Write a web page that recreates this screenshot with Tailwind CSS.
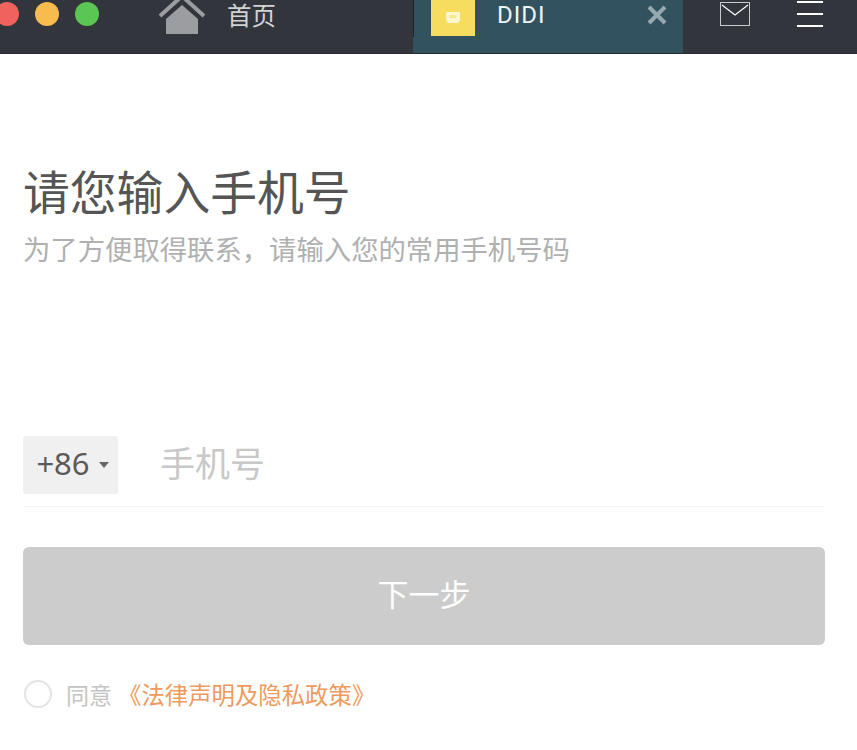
<!DOCTYPE html>
<html lang="zh-CN">
<head>
<meta charset="utf-8">
<script src="https://cdn.jsdelivr.net/npm/@tailwindcss/browser@4"></script>
</head>
<body class="w-[857px] h-[750px] overflow-hidden bg-white font-['Noto_Sans_CJK_SC','Noto_Sans',sans-serif]">
<header class="relative flex h-[54px] bg-[#32353c] border-b border-[#26292e] overflow-hidden">
  <div class="flex items-center gap-[16px] h-[28px] ml-[-5px]">
    <span class="w-[24px] h-[24px] rounded-full bg-[#f0625e]"></span>
    <span class="w-[24px] h-[24px] rounded-full bg-[#f8bb4d]"></span>
    <span class="w-[24px] h-[24px] rounded-full bg-[#5cc654]"></span>
  </div>
  <svg class="ml-[59px] mt-[-6px] shrink-0" width="48" height="42" viewBox="0 0 48 42"><path d="M2 22 L24 2 L46 22" fill="none" stroke="#9b9da1" stroke-width="4"/><path d="M8 25 L24 11 L40 25 V40 H8 Z" fill="#9b9da1"/></svg>
  <span class="ml-[21px] text-[24.5px] leading-[30px] text-[#d2d3d5]">首页</span>
  <div class="ml-[137px] flex h-[53px] w-[270px] bg-[#33525f]">
    <span class="h-[37px] w-[1px] bg-[#1d2229]"></span>
    <div class="ml-[17px] flex h-[36px] w-[44px] items-center justify-center bg-[#f6dd5f]">
      <svg width="16" height="14" viewBox="0 0 16 14"><path d="M1 2 Q1 1 2 1 H14 Q15 1 15 2 V9 L13 12 H3 L1 9 Z" fill="#fdf6cf"/><path d="M4 4 H12 L11 7 H5 Z" fill="#f6e88f"/></svg>
    </div>
    <span class="ml-[22px] text-[24px] leading-[31px] tracking-[1px] text-[#eef3f5] font-['Roboto',sans-serif]">DIDI</span>
    <svg class="ml-[101px] mt-[5px]" width="20" height="20" viewBox="0 0 20 20"><path d="M2 2 L18 18 M18 2 L2 18" stroke="#98a8af" stroke-width="4"/></svg>
  </div>
  <svg class="ml-[37px] mt-[2px]" width="30" height="24" viewBox="0 0 30 24"><rect x=".5" y=".5" width="29" height="23" fill="none" stroke="#c9cacc"/><path d="M2 3 L15 13 L28 3" fill="none" stroke="#fff" stroke-width="1.2"/></svg>
  <div class="ml-[47px] flex flex-col gap-[10px] mt-[1px]">
    <span class="w-[26px] h-[2px] bg-white"></span>
    <span class="w-[26px] h-[2px] bg-white"></span>
    <span class="w-[26px] h-[2px] bg-white"></span>
  </div>
</header>
<main class="px-[23px] pr-[32px]">
  <h1 class="mt-[106px] text-[46.8px] leading-[60px] font-normal text-[#555555]">请您输入手机号</h1>
  <p class="mt-[10px] text-[27.35px] leading-[36px] text-[#b0b0b0]">为了方便取得联系，请输入您的常用手机号码</p>
  <div class="mt-[170px] flex items-start border-b border-[#f2f2f2] h-[71px]">
    <div class="flex h-[58px] w-[95px] items-center justify-center gap-[9px] rounded-[3px] pl-[4px] bg-[#f0f0f0]">
      <span class="mt-[-4px] text-[31px] leading-[40px] text-[#5a5a5a] font-['Noto_Sans',sans-serif]">+86</span>
      <span class="border-x-[5.5px] border-t-[6px] border-x-transparent border-t-[#666]"></span>
    </div>
    <span class="ml-[42px] mt-[1px] text-[35px] leading-[50px] text-[#c8c8c8]">手机号</span>
  </div>
  <button class="mt-[40px] flex h-[98px] w-full items-center justify-center rounded-[6px] bg-[#cccccc] pb-[6px] text-[31px] text-white">下一步</button>
  <div class="mt-[33px] ml-[1px] flex items-center">
    <span class="h-[28px] w-[28px] rounded-full border-2 border-[#e4e4e4]"></span>
    <span class="ml-[14px] text-[23px] leading-[32px] text-[#c4c4c4]">同意</span>
    <span class="ml-[6px] text-[23.4px] leading-[32px] text-[#ee9a5c]">《法律声明及隐私政策》</span>
  </div>
</main>
</body>
</html>
